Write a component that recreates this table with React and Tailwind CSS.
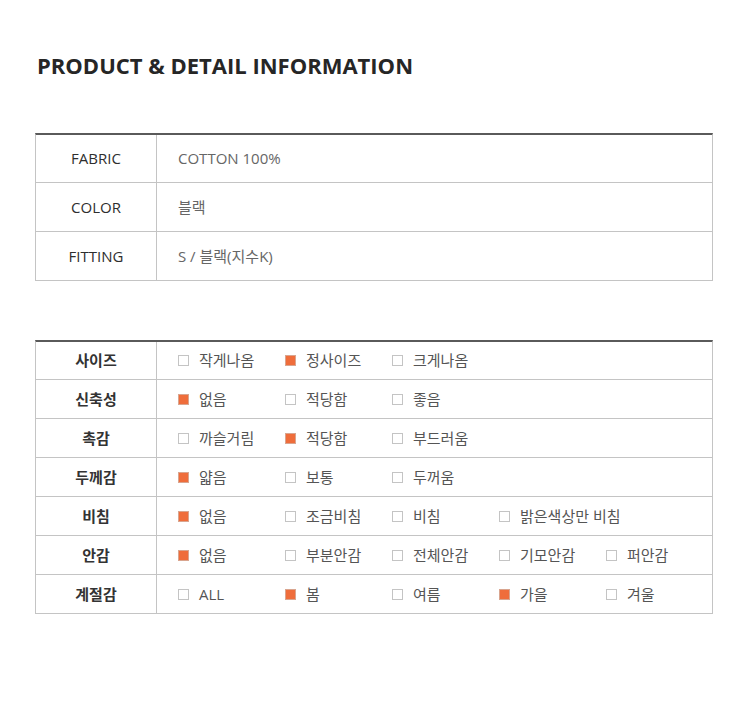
const font = { fontFamily: '"Open Sans", "Noto Sans CJK KR", sans-serif' };

const basics = [
  { label: 'FABRIC', value: 'COTTON 100%' },
  { label: 'COLOR', value: '블랙' },
  { label: 'FITTING', value: 'S / 블랙(지수K)' },
];

const details = [
  { label: '사이즈', options: [['작게나옴', false], ['정사이즈', true], ['크게나옴', false]] },
  { label: '신축성', options: [['없음', true], ['적당함', false], ['좋음', false]] },
  { label: '촉감', options: [['까슬거림', false], ['적당함', true], ['부드러움', false]] },
  { label: '두께감', options: [['얇음', true], ['보통', false], ['두꺼움', false]] },
  { label: '비침', options: [['없음', true], ['조금비침', false], ['비침', false], ['밝은색상만 비침', false]] },
  { label: '안감', options: [['없음', true], ['부분안감', false], ['전체안감', false], ['기모안감', false], ['퍼안감', false]] },
  { label: '계절감', options: [['ALL', false], ['봄', true], ['여름', false], ['가을', true], ['겨울', false]] },
];

const Check = ({ on }) => (
  <span
    className={`w-[11px] h-[11px] shrink-0 border ${on ? 'bg-[#ef6d3b] border-[#d9a58f]' : 'bg-white border-[#c4c4c4]'}`}
  />
);

const App = () => {
  return (
    <div className="w-[750px] min-h-[712px] bg-white px-[35px] pt-[50px]" style={font}>
      <h1 className="pl-[2px] text-[22px] leading-[30px] font-bold text-[#262626]">
        PRODUCT &amp; DETAIL INFORMATION
      </h1>

      <div className="mt-[53px] w-[678px] border-t-2 border-[#5a5a5a] border-x border-x-[#c4c4c4]">
        {basics.map((row, i) => (
          <div key={row.label} className={`flex border-b border-[#c4c4c4] ${i === 0 ? 'h-[48px]' : 'h-[49px]'}`}>
            <div className="w-[121px] shrink-0 border-r border-[#c4c4c4] flex items-center justify-center text-[15px] text-[#2e2e2e]">
              {row.label}
            </div>
            <div className="flex items-center pl-[21px] text-[15px] text-[#666]">{row.value}</div>
          </div>
        ))}
      </div>

      <div className="mt-[59px] w-[678px] border-t-2 border-[#5a5a5a] border-x border-x-[#c4c4c4]">
        {details.map((row, i) => (
          <div key={row.label} className={`flex border-b border-[#c4c4c4] ${i === 0 ? 'h-[38px]' : 'h-[39px]'}`}>
            <div className="w-[121px] shrink-0 border-r border-[#c4c4c4] flex items-center justify-center text-[15px] font-bold text-[#333]">
              {row.label}
            </div>
            <div className="flex items-center pl-[21px]">
              {row.options.map(([name, on]) => (
                <div key={name} className="w-[107px] shrink-0 flex items-center gap-[10px] text-[15px] text-[#555] whitespace-nowrap">
                  <Check on={on} />
                  <span>{name}</span>
                </div>
              ))}
            </div>
          </div>
        ))}
      </div>
    </div>
  );
};

export default App;
